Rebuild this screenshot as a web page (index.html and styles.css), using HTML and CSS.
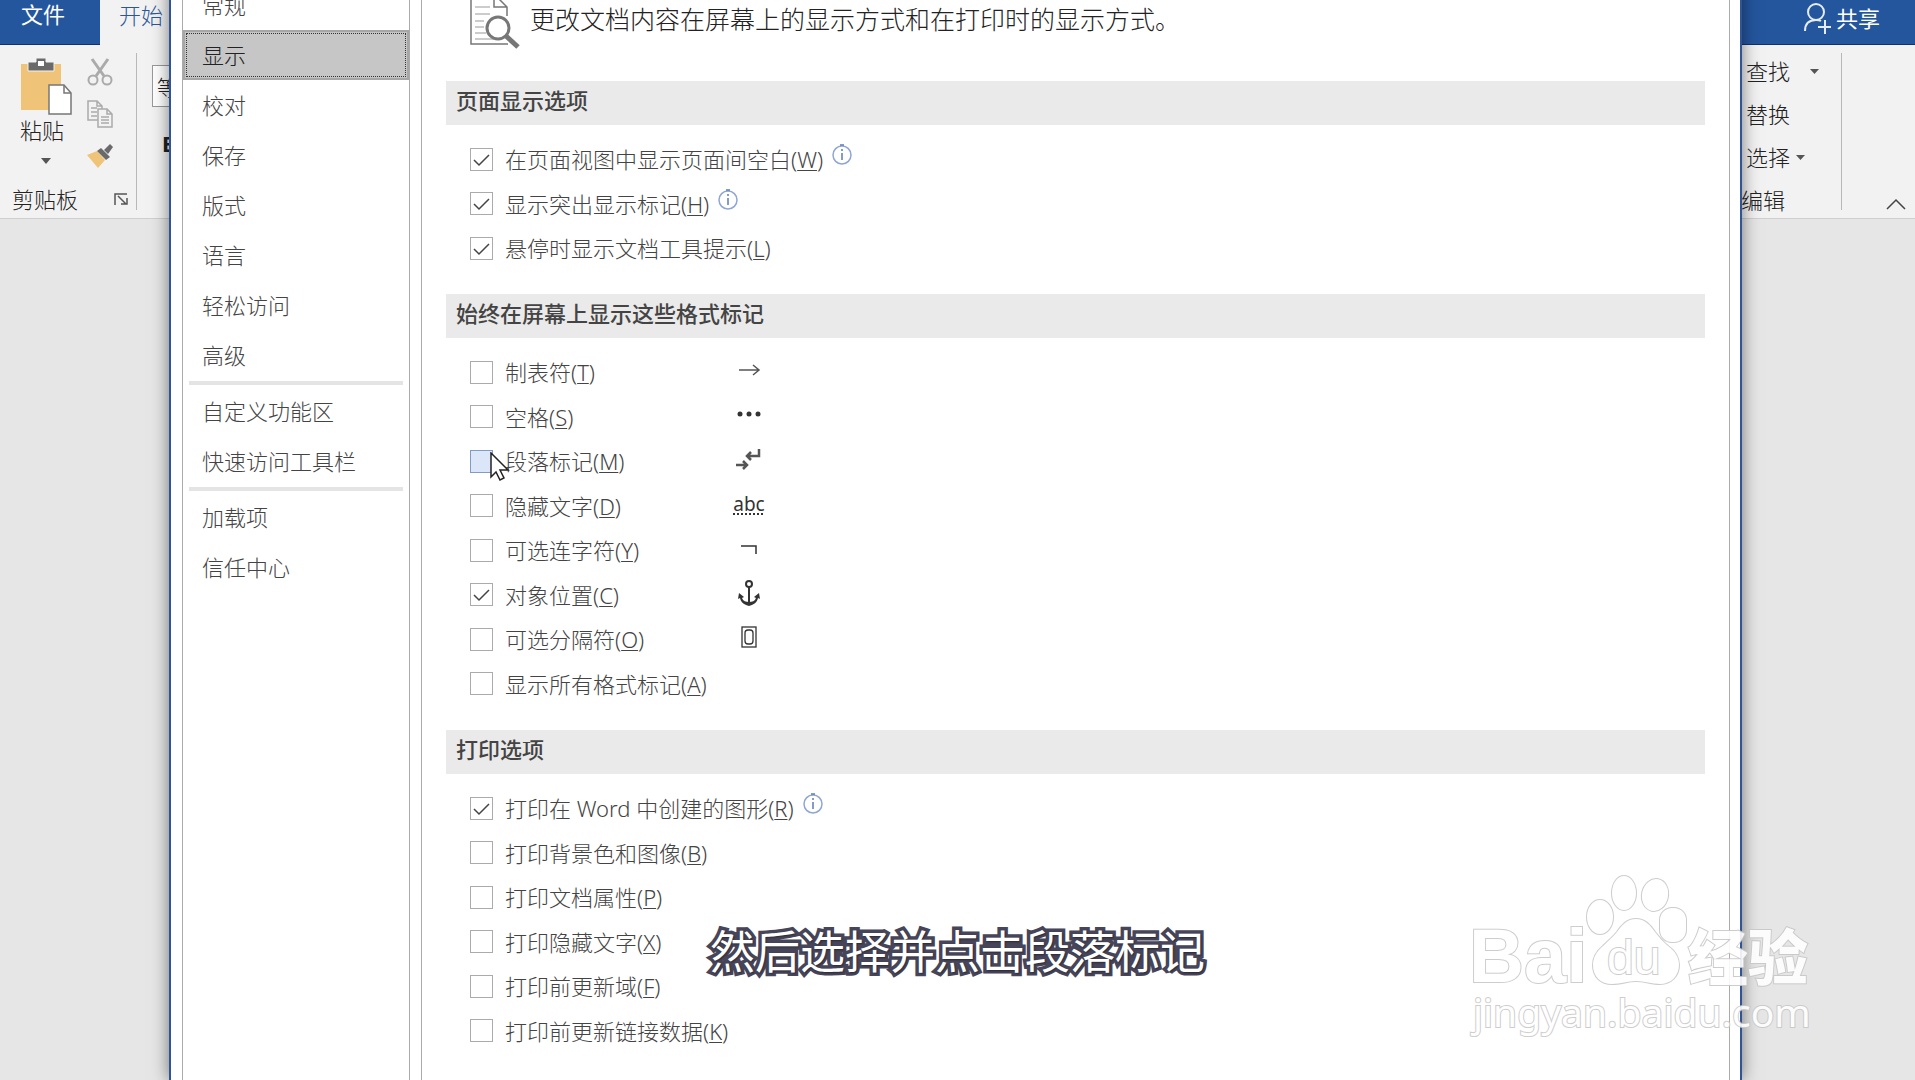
FILE: index.html
```html
<!DOCTYPE html>
<html lang="zh-CN">
<head>
<meta charset="utf-8">
<title>Word 选项</title>
<link rel="stylesheet" href="styles.css">
</head>
<body>
<div class="app">
  <header class="tabs">
    <button class="tab tab-file" type="button">文件</button>
    <button class="tab tab-active" type="button">开始</button>
    <button class="share" type="button">
      <svg width="28" height="32" viewBox="0 0 28 32" fill="none" stroke="#e4ecf8" stroke-width="2"><circle cx="13" cy="10" r="8"/><path d="M2 29c0-7 4-11 11-11 2 0 4 .4 5 1M22 18v14M15 25h13"/></svg>
      共享
    </button>
  </header>
  <div class="ribbon">
    <section class="group clipboard">
      <div class="tools">
        <button class="paste" type="button">
          <svg width="52" height="58" viewBox="0 0 52 58"><path d="M1 6h40v46H1z" fill="#f0c478"/><path d="M8 4h8V0h10v4h8v9H8z" fill="#6a6a6a" stroke="#f2f2f2"/><path d="M18 3h6v5h-6z" fill="#fff"/><path d="M29 27h15l7 8v21H29z" fill="#fff" stroke="#777" stroke-width="1.5"/><path d="M44 27v8h7" fill="none" stroke="#777" stroke-width="1.5"/></svg>
          <span>粘贴</span>
          <svg width="10" height="6" viewBox="0 0 10 6"><path d="M0 0h10L5 6z" fill="#555"/></svg>
        </button>
        <div class="small-tools">
          <button type="button" aria-label="剪切"><svg width="26" height="28" viewBox="0 0 26 28" fill="none" stroke="#aaa" stroke-width="2"><circle cx="6" cy="22" r="4.500"/><circle cx="20" cy="22" r="4.500"/><path d="M5 1l12 17M21 1L9 18" stroke-width="3"/></svg></button>
          <button type="button" aria-label="复制"><svg width="26" height="28" viewBox="0 0 26 28" fill="#f2f2f2" stroke="#aaa" stroke-width="1.500"><path d="M1 1h9l5 5v14H1zM10 1v5h5M4 8h6M4 12h6M4 16h6"/><path d="M11 9h9l5 5v13H11zM20 9v5h5M14 17h8M14 20h8M14 23h8"/></svg></button>
          <button type="button" aria-label="格式刷"><svg width="26" height="26" viewBox="0 0 26 26"><path d="M0 12l10-4 8 9-7 8z" fill="#f0c478"/><path d="M10 8l4-3 9 9-4 3z" fill="#6a6a6a"/><path d="M17 7l6-6 3 3-5 7z" fill="#6a6a6a"/></svg></button>
        </div>
      </div>
      <div class="group-name"><span>剪贴板</span>
        <svg width="14" height="12" viewBox="0 0 14 12" fill="none" stroke="#555" stroke-width="1.500"><path d="M1 12V1h12M4 3l8 8M13 5v6H7"/></svg>
      </div>
    </section>
    <section class="group font-group">
      <input class="font-name" type="text" value="等线" aria-label="字体">
      <button class="bold" type="button">B</button>
    </section>
    <section class="group editing">
      <button type="button">查找 <svg class="far" width="9" height="5" viewBox="0 0 9 5"><path d="M0 0h9L4.500 5z" fill="#555"/></svg></button>
      <button type="button">替换</button>
      <button type="button">选择 <svg width="9" height="5" viewBox="0 0 9 5"><path d="M0 0h9L4.500 5z" fill="#555"/></svg></button>
      <span class="editing-name">编辑</span>
    </section>
    <button class="collapse" type="button" aria-label="折叠功能区"><svg width="20" height="12" viewBox="0 0 20 12" fill="none" stroke="#444" stroke-width="1.500"><path d="M1 11l9-9 9 9"/></svg></button>
  </div>
</div>

<main class="dialog">
  <nav class="nav">
    <a href="#general">常规</a>
    <a class="selected" href="#display">显示</a>
    <a href="#proofing">校对</a>
    <a href="#save">保存</a>
    <a href="#layout">版式</a>
    <a href="#language">语言</a>
    <a href="#access">轻松访问</a>
    <a href="#advanced">高级</a>
    <hr>
    <a href="#ribbon">自定义功能区</a>
    <a href="#toolbar">快速访问工具栏</a>
    <hr>
    <a href="#addins">加载项</a>
    <a href="#trust">信任中心</a>
  </nav>
  <div class="panel">
    <div class="intro">
      <svg width="50" height="62" viewBox="0 0 50 62" fill="none" stroke="#777"><path d="M1 0v57h37M24 4v16h13M24 7l13 13v9" stroke-width="1.500"/><path d="M5 20h15M5 27h15M5 34h9M5 40h9M5 46h11M5 52h19" stroke="#999"/><circle cx="28" cy="41" r="11" stroke-width="3" fill="#fff"/><path d="M36 49l12 11" stroke-width="5"/></svg>
      <p>更改文档内容在屏幕上的显示方式和在打印时的显示方式。</p>
    </div>

    <section>
      <h2>页面显示选项</h2>
      <div class="options">
        <div class="option"><input type="checkbox" id="w" checked><label for="w">在页面视图中显示页面间空白(<u>W</u>)</label><svg class="info" width="22" height="22" viewBox="0 0 22 22"><circle cx="11" cy="11" r="9" fill="none" stroke="#8fa6d2" stroke-width="1.500"/><path d="M11 9v7M11 5v2M9 1h4" stroke="#5d7cb8" stroke-width="1.500"/></svg></div>
        <div class="option"><input type="checkbox" id="h" checked><label for="h">显示突出显示标记(<u>H</u>)</label><svg class="info" width="22" height="22" viewBox="0 0 22 22"><circle cx="11" cy="11" r="9" fill="none" stroke="#8fa6d2" stroke-width="1.500"/><path d="M11 9v7M11 5v2M9 1h4" stroke="#5d7cb8" stroke-width="1.500"/></svg></div>
        <div class="option"><input type="checkbox" id="l" checked><label for="l">悬停时显示文档工具提示(<u>L</u>)</label></div>
      </div>
    </section>

    <section>
      <h2>始终在屏幕上显示这些格式标记</h2>
      <div class="options marks">
        <div class="option"><input type="checkbox" id="t"><label for="t">制表符(<u>T</u>)</label><svg class="mark" width="36" height="28" viewBox="0 0 36 28" fill="none" stroke="#555" stroke-width="1.500"><path d="M8 14h20M22 9l6 5-6 5"/></svg></div>
        <div class="option"><input type="checkbox" id="s"><label for="s">空格(<u>S</u>)</label><svg class="mark" width="36" height="28" viewBox="0 0 36 28" fill="#333"><circle cx="9" cy="13" r="2.500"/><circle cx="18" cy="13" r="2.500"/><circle cx="27" cy="13" r="2.500"/></svg></div>
        <div class="option"><input type="checkbox" id="m" class="hover"><label for="m">段落标记(<u>M</u>)</label><svg class="mark" width="36" height="28" viewBox="0 0 36 28" fill="none" stroke="#555" stroke-width="2.500"><path d="M28 4v7H16M20 7l-4 4 4 4M5 20h11M12 16l4 4-4 4"/></svg>
          <svg class="cursor" width="20" height="30" viewBox="0 0 20 30"><path d="M1 1v24l5-5 4 8 4-2-4-8h8z" fill="#fff" stroke="#222" stroke-width="1.500"/></svg></div>
        <div class="option"><input type="checkbox" id="d"><label for="d">隐藏文字(<u>D</u>)</label><span class="mark abc">abc</span></div>
        <div class="option"><input type="checkbox" id="y"><label for="y">可选连字符(<u>Y</u>)</label><svg class="mark" width="36" height="28" viewBox="0 0 36 28" fill="none" stroke="#333" stroke-width="1.500"><path d="M10 12h15v8"/></svg></div>
        <div class="option"><input type="checkbox" id="c" checked><label for="c">对象位置(<u>C</u>)</label><svg class="mark" width="36" height="28" viewBox="0 0 36 28" fill="none" stroke="#333" stroke-width="2"><circle cx="18" cy="5" r="3"/><path d="M18 8v17"/><path d="M7 20l1-6 5 4-2 1c1 3 4 4 7 4s6-1 7-4l-2-1 5-4 1 6-2-1c-1 5-5 7-9 8-4-1-8-3-9-8z" fill="#333" stroke="none"/></svg></div>
        <div class="option"><input type="checkbox" id="o"><label for="o">可选分隔符(<u>O</u>)</label><svg class="mark" width="36" height="28" viewBox="0 0 36 28" fill="none" stroke="#333" stroke-width="1.300"><rect x="11" y="4" width="14" height="20"/><rect x="14" y="7" width="8" height="14" rx="3"/></svg></div>
        <div class="option"><input type="checkbox" id="a"><label for="a">显示所有格式标记(<u>A</u>)</label></div>
      </div>
    </section>

    <section>
      <h2>打印选项</h2>
      <div class="options">
        <div class="option"><input type="checkbox" id="r" checked><label for="r">打印在 Word 中创建的图形(<u>R</u>)</label><svg class="info" width="22" height="22" viewBox="0 0 22 22"><circle cx="11" cy="11" r="9" fill="none" stroke="#8fa6d2" stroke-width="1.500"/><path d="M11 9v7M11 5v2M9 1h4" stroke="#5d7cb8" stroke-width="1.500"/></svg></div>
        <div class="option"><input type="checkbox" id="b"><label for="b">打印背景色和图像(<u>B</u>)</label></div>
        <div class="option"><input type="checkbox" id="p"><label for="p">打印文档属性(<u>P</u>)</label></div>
        <div class="option"><input type="checkbox" id="x"><label for="x">打印隐藏文字(<u>X</u>)</label></div>
        <div class="option"><input type="checkbox" id="f"><label for="f">打印前更新域(<u>F</u>)</label></div>
        <div class="option"><input type="checkbox" id="k"><label for="k">打印前更新链接数据(<u>K</u>)</label></div>
      </div>
    </section>
  </div>
</main>

<p class="subtitle">然后选择并点击段落标记</p>

<svg class="watermark" width="360" height="180" viewBox="0 0 360 180">
  <text class="logo-latin" x="4" y="112">Bai</text>
  <ellipse cx="135" cy="47" rx="13" ry="17"/>
  <ellipse cx="159" cy="23" rx="12" ry="17"/>
  <ellipse cx="190" cy="25" rx="13" ry="16" transform="rotate(12 190 25)"/>
  <rect x="195" y="38" width="26" height="34" rx="12"/>
  <path d="M171 49c-9 0-14 6-19 13-4 5-9 9-14 14-7 6-10 12-10 19 0 12 8 19 19 19 9 0 16-3 24-3s16 3 24 3c11 0 19-8 19-19 0-8-4-14-11-19-5-4-9-9-13-14-5-7-10-13-19-13z"/>
  <text class="logo-du" x="142" y="104">du</text>
  <text class="logo-cjk" x="223" y="110">经验</text>
  <text class="logo-url" x="8" y="157">jingyan.baidu.com</text>
</svg>
</body>
</html>
```

FILE: styles.css
```css
* { box-sizing: border-box; }

body {
  margin: 0;
  height: 100vh;
  position: relative;
  overflow: hidden;
  background: #e6e6e6;
  color: #444;
  font: 300 22px/28px "Noto Sans", "Noto Sans CJK SC", sans-serif;
}

button {
  padding: 0;
  border: 0;
  background: none;
  color: inherit;
  font: inherit;
  white-space: nowrap;
}

svg { flex: none; }

/* Word window */
.tabs {
  display: flex;
  height: 45px;
  background: #24569e;
  border-bottom: 1px solid #14306a;
}

.tab {
  width: 100px;
  padding: 0 14px 16px;
}

.tab-file {
  padding-right: 28px;
  color: #fff;
  font-weight: 400;
}

.tab-active {
  height: 45px;
  padding-right: 32px;
  background: #f2f2f2;
  color: #2b579a;
}

.share {
  display: flex;
  align-items: center;
  gap: 5px;
  margin-left: auto;
  padding: 0 35px 8px 0;
  color: #fff;
  font-weight: 400;
}

.ribbon {
  display: flex;
  height: 174px;
  padding: 8px 0;
  background: #f2f2f2;
  border-bottom: 1px solid #cfcfcf;
  color: #222;
}

.group { border-right: 1px solid #b8b8b8; }

.clipboard {
  width: 137px;
  display: flex;
  flex-direction: column;
  justify-content: space-between;
}

.tools {
  display: flex;
  gap: 15px;
  padding: 5px 0 0 20px;
}

.paste {
  display: flex;
  flex-direction: column;
  align-items: center;
  width: 52px;
}

.paste span {
  margin: 0 8px 14px 0;
}

.small-tools {
  display: flex;
  flex-direction: column;
  gap: 14px;
}

.small-tools button { height: 28px; }
.small-tools svg { display: block; }

.group-name {
  display: flex;
  align-items: center;
  justify-content: space-between;
  height: 22px;
  padding: 0 8px 0 12px;
}

.font-group {
  display: flex;
  flex-direction: column;
  align-items: flex-start;
  gap: 22px;
  padding: 12px 15px;
}

.font-name {
  width: 150px;
  height: 42px;
  padding: 0 4px;
  border: 1px solid #999;
  color: #222;
  font: inherit;
}

.bold {
  margin-left: 10px;
  font-weight: 700;
}

.editing {
  display: flex;
  flex-direction: column;
  align-items: flex-start;
  gap: 15px;
  width: 101px;
  margin-left: auto;
  padding: 4px 0 0 5px;
}

.editing button {
  display: flex;
  align-items: center;
  gap: 6px;
}

.editing .far { margin-left: 14px; }
.editing-name { margin-left: -5px; }

.collapse {
  display: flex;
  align-items: flex-end;
  margin: 0 9px 0 44px;
}

/* Options dialog */
.dialog {
  position: absolute;
  inset: -20px 173px 0 169px;
  display: flex;
  gap: 11px;
  padding: 0 10px 0 11px;
  background: #fff;
  border: solid #2f5597;
  border-width: 0 2px;
  box-shadow: 0 0 16px rgba(0, 0, 0, 0.5);
}

.nav {
  width: 228px;
  border: solid #ababab;
  border-width: 0 1px;
}

.nav a {
  display: flex;
  align-items: center;
  height: 50px;
  padding-left: 19px;
  color: #444;
  text-decoration: none;
}

.nav .selected {
  padding-left: 17px;
  background: #c6c6c6;
  border: 2px solid #a6a6a6;
  outline: 1px dotted #333;
  outline-offset: -4px;
  color: #222;
}

.nav hr {
  height: 4px;
  margin: 1px 6px;
  border: 0;
  background: #e4e4e4;
}

.panel {
  flex: 1;
  padding: 0 24px;
  border: solid #ababab;
  border-width: 0 1px;
}

.intro {
  display: flex;
  gap: 10px;
  height: 101px;
  padding: 7px 0 0 24px;
  color: #222;
  font-size: 25px;
  line-height: 64px;
}

.intro p { margin: 0; }

h2 {
  height: 44px;
  margin: 0;
  padding: 5px 10px;
  background: #eaeaea;
  font-size: 22px;
  line-height: 28px;
  font-weight: 500;
}

.options {
  display: grid;
  grid-auto-rows: 44px 45px;
  padding: 12px 0 24px 24px;
}

.option {
  position: relative;
  display: flex;
  align-items: center;
}

.option input {
  appearance: none;
  width: 23px;
  height: 23px;
  margin: 0 12px 0 0;
  border: 1px solid #ababab;
  background: #fff center / 100% no-repeat;
}

.option input:checked {
  background-image: url("data:image/svg+xml,%3Csvg xmlns='http://www.w3.org/2000/svg' viewBox='0 0 21 21'%3E%3Cpath d='M3 11l5 5L18 6' fill='none' stroke='%23444' stroke-width='1.5'/%3E%3C/svg%3E");
}

.option .hover {
  background-color: #dbe7f9;
  border-color: #7f9bc8;
}

.option u {
  text-decoration-thickness: 1px;
  text-underline-offset: 2px;
}

.info { margin: 0 0 8px 8px; }

.marks label { width: 226px; }

.mark {
  width: 36px;
  margin-bottom: 4px;
}

.abc {
  color: #333;
  font-size: 19px;
  line-height: 22px;
  font-weight: 400;
  text-align: center;
  text-decoration: underline dotted 2px;
  text-underline-offset: 3px;
}

.cursor {
  position: absolute;
  left: 20px;
  top: 13px;
}

/* Video overlays */
.subtitle {
  position: absolute;
  inset: auto 0 95px;
  margin: 0;
  color: #fff;
  font-size: 45px;
  line-height: 66px;
  font-weight: 400;
  text-align: center;
  -webkit-text-stroke: 7px #474559;
  paint-order: stroke fill;
  text-shadow: 1px 1px 2px rgba(0, 0, 0, 0.4);
}

.watermark {
  position: absolute;
  right: 90px;
  bottom: 30px;
  fill: #fff;
  stroke: #c8c8c8;
  stroke-width: 2px;
  paint-order: stroke fill;
  opacity: 0.9;
}

.logo-latin {
  font: 700 76px "Liberation Sans", sans-serif;
}

.logo-du {
  font: 400 48px "Liberation Sans", sans-serif;
}

.logo-cjk {
  font: 900 60px "Noto Sans CJK SC", sans-serif;
}

.logo-url {
  font: 400 39px "Noto Sans", sans-serif;
}
```
